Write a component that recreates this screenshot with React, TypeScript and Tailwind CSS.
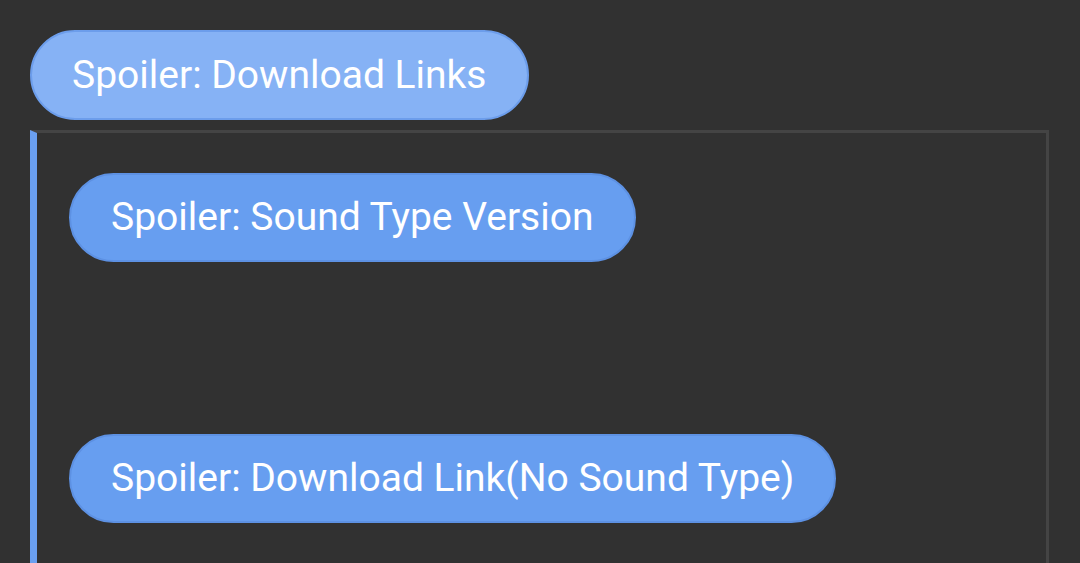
export default function App() {
  return (
    <div className="min-h-[563px] w-full overflow-hidden bg-[#313131] pl-[30px] pr-[31px] pt-[30px] font-['Roboto',sans-serif] text-white">
      <button className="h-[90px] rounded-full border-2 border-[#6c9deb] bg-[#86b2f5] px-[40px] text-[39px] leading-none text-white">
        Spoiler: Download Links
      </button>
      <div className="mt-[10px] h-[440px] border-t-[3px] border-r-[3px] border-l-[7px] border-t-[#444444] border-r-[#444444] border-l-[#6a9ff0] pl-[32px] pt-[40px]">
        <div className="flex flex-col items-start gap-[172px]">
          <button className="h-[89px] rounded-full border-2 border-[#5d91e3] bg-[#679ef0] px-[40px] text-[39px] leading-none text-white">
            Spoiler: Sound Type Version
          </button>
          <button className="h-[89px] rounded-full border-2 border-[#5d91e3] bg-[#679ef0] px-[40px] text-[39px] leading-none text-white">
            Spoiler: Download Link(No Sound Type)
          </button>
        </div>
      </div>
    </div>
  );
}
